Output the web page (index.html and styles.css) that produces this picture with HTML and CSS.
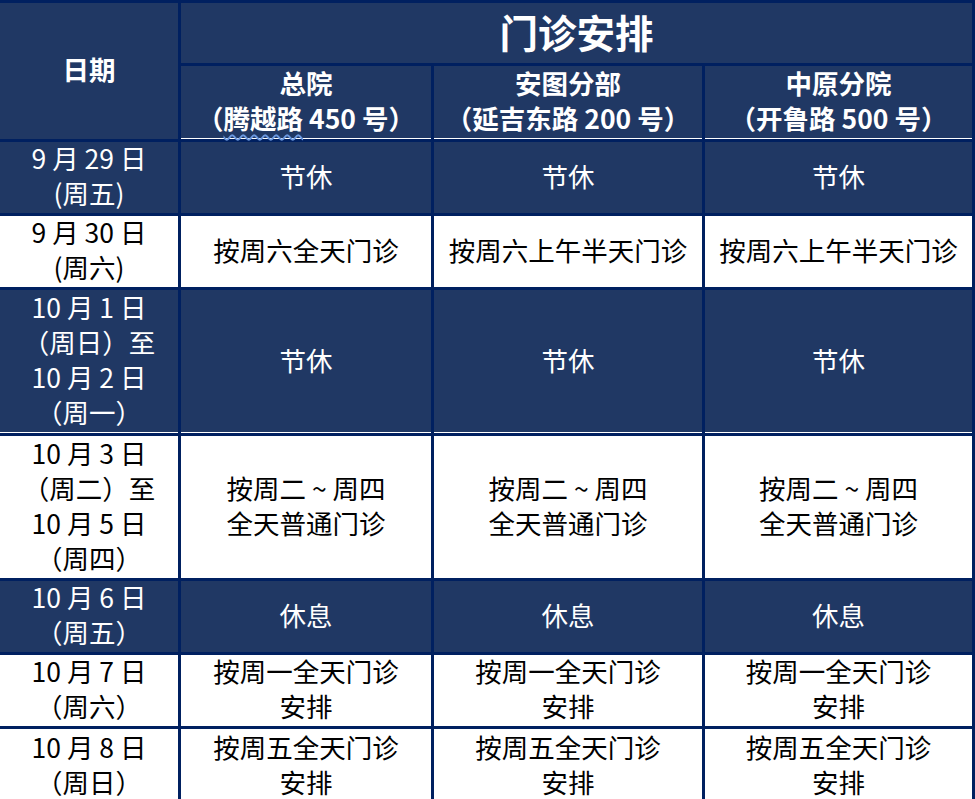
FILE: index.html
```html
<!DOCTYPE html>
<html lang="zh-CN">
<head>
<meta charset="utf-8">
<title>门诊安排</title>
<link rel="stylesheet" href="styles.css">
</head>
<body>
<div class="sheet">
  <div class="cell dark head date-head"><span class="txt">日期</span></div>
  <div class="cell dark head title"><span class="txt">门诊安排</span></div>
  <div class="cell dark head sub"><span class="txt">总院<br>（<span class="squiggle">腾越路</span> 450 号）</span></div>
  <div class="cell dark head sub"><span class="txt">安图分部<br>（延吉东路 200 号）</span></div>
  <div class="cell dark head sub"><span class="txt">中原分院<br>（开鲁路 500 号）</span></div>

  <div class="cell dark"><span class="txt">9 月 29 日<br>(周五)</span></div>
  <div class="cell dark"><span class="txt">节休</span></div>
  <div class="cell dark"><span class="txt">节休</span></div>
  <div class="cell dark"><span class="txt">节休</span></div>

  <div class="cell light"><span class="txt">9 月 30 日<br>(周六)</span></div>
  <div class="cell light"><span class="txt">按周六全天门诊</span></div>
  <div class="cell light"><span class="txt">按周六上午半天门诊</span></div>
  <div class="cell light"><span class="txt">按周六上午半天门诊</span></div>

  <div class="cell dark line"><span class="txt">10 月 1 日<br>（周日）至<br>10 月 2 日<br>（周一）</span></div>
  <div class="cell dark line"><span class="txt">节休</span></div>
  <div class="cell dark line"><span class="txt">节休</span></div>
  <div class="cell dark line"><span class="txt">节休</span></div>

  <div class="cell light"><span class="txt">10 月 3 日<br>（周二）至<br>10 月 5 日<br>（周四）</span></div>
  <div class="cell light"><span class="txt">按周二 ~ 周四<br>全天普通门诊</span></div>
  <div class="cell light"><span class="txt">按周二 ~ 周四<br>全天普通门诊</span></div>
  <div class="cell light"><span class="txt">按周二 ~ 周四<br>全天普通门诊</span></div>

  <div class="cell dark"><span class="txt">10 月 6 日<br>（周五）</span></div>
  <div class="cell dark"><span class="txt">休息</span></div>
  <div class="cell dark"><span class="txt">休息</span></div>
  <div class="cell dark"><span class="txt">休息</span></div>

  <div class="cell light"><span class="txt">10 月 7 日<br>（周六）</span></div>
  <div class="cell light"><span class="txt">按周一全天门诊<br>安排</span></div>
  <div class="cell light"><span class="txt">按周一全天门诊<br>安排</span></div>
  <div class="cell light"><span class="txt">按周一全天门诊<br>安排</span></div>

  <div class="cell light"><span class="txt">10 月 8 日<br>（周日）</span></div>
  <div class="cell light"><span class="txt">按周五全天门诊<br>安排</span></div>
  <div class="cell light"><span class="txt">按周五全天门诊<br>安排</span></div>
  <div class="cell light"><span class="txt">按周五全天门诊<br>安排</span></div>
</div>
</body>
</html>
```
FILE: styles.css
```css
html, body {
  margin: 0;
  padding: 0;
  background: #ffffff;
  overflow: hidden;
}

.sheet {
  display: grid;
  grid-template-columns: 178px 250px 268px 267px;
  grid-template-rows: 60px 73px 71px 71px 143px 142px 71px 71px 74px;
  gap: 3px;
  padding: 3px 3px 0 0;
  width: 972px;
  background: #002060;
  font-family: "Noto Sans CJK SC", "Noto Sans", sans-serif;
  font-size: 26.5px;
  line-height: 35px;
}

.cell {
  display: flex;
  align-items: center;
  justify-content: center;
  text-align: center;
  white-space: nowrap;
  padding-bottom: 5px;
}

.txt {
  display: block;
}

.dark {
  background: #203864;
  color: #ffffff;
}

.light {
  background: #ffffff;
  color: #000000;
}

.head {
  font-weight: bold;
}

.date-head {
  grid-row: span 2;
}

.title {
  grid-column: span 3;
  font-size: 38.5px;
  line-height: 44px;
}

.sub {
  box-shadow: inset 0 -1px 0 #ffffff;
}

.line {
  box-shadow: inset 0 -1px 0 #ffffff;
}

.squiggle {
  text-decoration-line: underline;
  text-decoration-style: wavy;
  text-decoration-color: #6a98e0;
  text-decoration-thickness: 1.5px;
  text-underline-offset: 5px;
}
```
